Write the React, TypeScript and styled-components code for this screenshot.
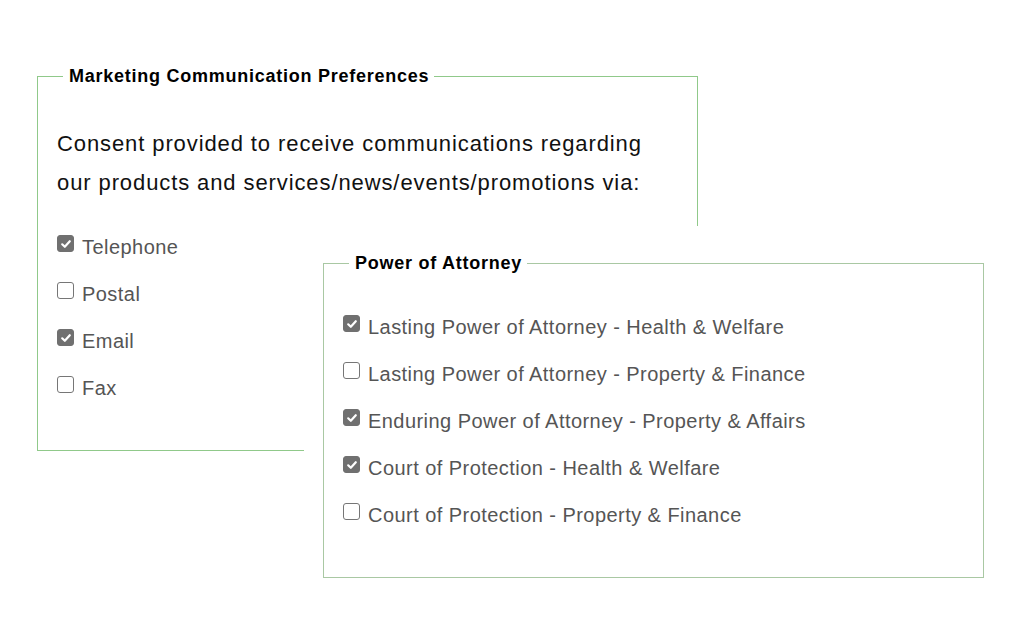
import React from "react";
import styled, { createGlobalStyle } from "styled-components";

const marketing = [
  { label: "Telephone", checked: true },
  { label: "Postal", checked: false },
  { label: "Email", checked: true },
  { label: "Fax", checked: false },
];

const attorney = [
  { label: "Lasting Power of Attorney - Health & Welfare", checked: true },
  { label: "Lasting Power of Attorney - Property & Finance", checked: false },
  { label: "Enduring Power of Attorney - Property & Affairs", checked: true },
  { label: "Court of Protection - Health & Welfare", checked: true },
  { label: "Court of Protection - Property & Finance", checked: false },
];

const CheckMark = () => (
  <svg width="12" height="12" viewBox="0 0 12 12">
    <path
      d="M2.2 6.3 L4.8 8.8 L9.8 3.2"
      fill="none"
      stroke="#fff"
      strokeWidth="2.2"
      strokeLinecap="round"
      strokeLinejoin="round"
    />
  </svg>
);

const OptionList = ({ items }: { items: { label: string; checked: boolean }[] }) => (
  <List>
    {items.map((item) => (
      <Row key={item.label}>
        <Box $checked={item.checked}>{item.checked && <CheckMark />}</Box>
        <Label>{item.label}</Label>
      </Row>
    ))}
  </List>
);

const App = () => {
  return (
    <>
      <GlobalStyle />
      <Canvas>
        <Fieldset $color="#90c98a" $bottom={39}>
          <Legend>Marketing Communication Preferences</Legend>
          <Intro>
            Consent provided to receive communications regarding
            <br />
            our products and services/news/events/promotions via:
          </Intro>
          <Spacer $h={21} />
          <OptionList items={marketing} />
        </Fieldset>

        <Overlay>
          <Fieldset $color="#a9c8a3" $bottom={39}>
            <Legend>Power of Attorney</Legend>
            <Spacer $h={30} />
            <OptionList items={attorney} />
          </Fieldset>
        </Overlay>
      </Canvas>
    </>
  );
};

export default App;

const GlobalStyle = createGlobalStyle`
  * {
    box-sizing: border-box;
  }
  body {
    margin: 0;
    background: #fff;
    font-family: "Liberation Sans", Arial, sans-serif;
  }
`;

const Canvas = styled.div`
  position: relative;
  width: 1024px;
  height: 631px;
  padding: 66px 0 0 37px;
  overflow: hidden;
`;

const Fieldset = styled.fieldset<{ $color: string; $bottom: number }>`
  width: 661px;
  margin: 0;
  padding: 0 19px ${(p) => p.$bottom}px;
  border: 1px solid ${(p) => p.$color};
  min-inline-size: 0;
`;

const Legend = styled.legend`
  margin-left: 6px;
  padding: 0 5px 0 6px;
  font-size: 18px;
  line-height: 20px;
  font-weight: bold;
  letter-spacing: 0.75px;
  color: #000;
`;

const Intro = styled.p`
  margin: 38px 0 0;
  font-size: 22px;
  line-height: 39px;
  letter-spacing: 0.9px;
  color: #111;
  white-space: nowrap;
`;

const Spacer = styled.div<{ $h: number }>`
  height: ${(p) => p.$h}px;
`;

const List = styled.div`
  display: flex;
  flex-direction: column;
`;

const Row = styled.label`
  display: flex;
  align-items: center;
  height: 47px;
  column-gap: 8px;
`;

const Box = styled.span<{ $checked: boolean }>`
  display: flex;
  align-items: center;
  justify-content: center;
  width: 17px;
  height: 17px;
  margin-top: -6px;
  border-radius: 3px;
  background: ${(p) => (p.$checked ? "#707070" : "#fff")};
  border: 1px solid ${(p) => (p.$checked ? "#707070" : "#767676")};
`;

const Label = styled.span`
  font-size: 20px;
  line-height: 24px;
  letter-spacing: 0.45px;
  color: #555;
`;

const Overlay = styled.div`
  position: absolute;
  left: 304px;
  top: 226px;
  padding: 27px 19px 19px;
  background: #fff;
`;
